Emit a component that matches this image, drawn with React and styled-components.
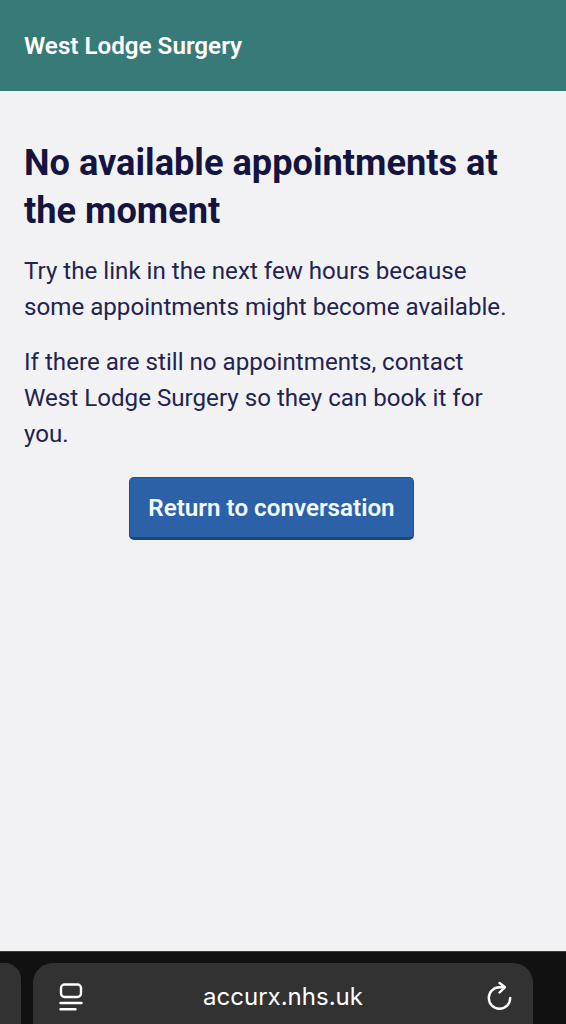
import React from 'react';
import styled, { createGlobalStyle } from 'styled-components';

const GlobalStyle = createGlobalStyle`
  html, body {
    margin: 0;
    padding: 0;
    height: 100%;
    background: #f2f2f5;
  }

  body {
    font-family: Roboto, "Liberation Sans", sans-serif;
  }
`;

const Page = styled.div`
  display: flex;
  flex-direction: column;
  width: 566px;
  height: 1024px;
  overflow: hidden;
  background: #f2f2f5;
`;

const Header = styled.header`
  display: flex;
  align-items: center;
  flex: none;
  height: 91px;
  padding: 0 24px;
  box-sizing: border-box;
  background: #387a78;
`;

const SurgeryName = styled.span`
  color: #fff;
  font-size: 24.2px;
  font-weight: 600;
`;

const Main = styled.main`
  flex: 1;
  padding: 48px 47px 0 24px;
`;

const Title = styled.h1`
  margin: 0 0 18px;
  color: #14143f;
  font-size: 36.2px;
  line-height: 48px;
  font-weight: 700;
`;

const Para = styled.p`
  margin: 0 0 18px;
  color: #232350;
  font-size: 24.15px;
  line-height: 36.3px;
  font-weight: 400;
`;

const ButtonRow = styled.div`
  display: flex;
  justify-content: center;
  margin-top: 25px;
`;

const PrimaryButton = styled.button`
  width: 285px;
  height: 63px;
  border: 1px solid #1f4f8f;
  border-bottom: 3px solid #1c4680;
  border-radius: 5px;
  background: #2c61a8;
  color: #f2fbff;
  font-family: inherit;
  font-size: 24.2px;
  font-weight: 600;
`;

const BrowserBar = styled.footer`
  display: flex;
  gap: 12px;
  flex: none;
  height: 73px;
  padding-top: 11px;
  box-sizing: border-box;
  background: #111112;
  border-top: 1px solid #3a3a3c;
`;

const SideTab = styled.div`
  flex: none;
  width: 21px;
  border-radius: 0 16px 0 0;
  background: #323232;
`;

const AddressBar = styled.div`
  display: flex;
  align-items: flex-start;
  justify-content: space-between;
  width: 500px;
  padding: 20px 21px 0 25px;
  box-sizing: border-box;
  border-radius: 20px 20px 0 0;
  background: #323232;
`;

const Url = styled.span`
  color: #fff;
  font-family: Inter, "Liberation Sans", sans-serif;
  font-size: 24px;
  line-height: 28px;
  margin-left: -4px;
`;

const BarIcon = styled.svg`
  flex: none;
  fill: none;
  stroke: #fff;
  stroke-width: 2.4;
  stroke-linecap: round;
  stroke-linejoin: round;
  overflow: visible;
`;

const App = () => (
  <Page>
    <GlobalStyle />
    <Header>
      <SurgeryName>West Lodge Surgery</SurgeryName>
    </Header>
    <Main>
      <Title>No available appointments at the moment</Title>
      <Para>Try the link in the next few hours because some appointments might become available.</Para>
      <Para>If there are still no appointments, contact West Lodge Surgery so they can book it for you.</Para>
      <ButtonRow>
        <PrimaryButton>Return to conversation</PrimaryButton>
      </ButtonRow>
    </Main>
    <BrowserBar>
      <SideTab />
      <AddressBar>
        <BarIcon width="26" height="30" viewBox="0 0 26 30">
          <rect x="3" y="1.5" width="20" height="12.5" rx="3.5" />
          <path d="M2.5 20h21M2.5 26.3h15" />
        </BarIcon>
        <Url>accurx.nhs.uk</Url>
        <BarIcon width="26" height="30" viewBox="0 0 26 30">
          <path d="M18 4.3h-4.5a10.7 10.7 0 1 0 10.7 10.7" />
          <path d="M13.5 0l5.5 4.3-5.5 5.2" />
        </BarIcon>
      </AddressBar>
    </BrowserBar>
  </Page>
);

export default App;
